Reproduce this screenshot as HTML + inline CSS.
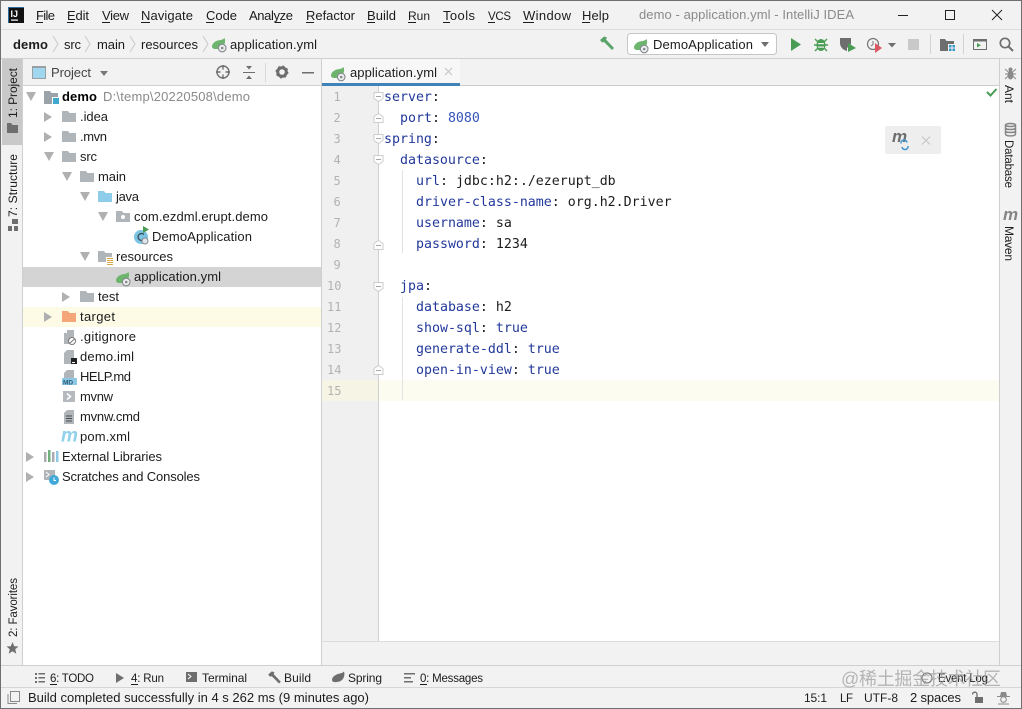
<!DOCTYPE html>
<html><head><meta charset="utf-8"><title>demo - application.yml - IntelliJ IDEA</title>
<style>
html,body{margin:0;padding:0;background:#f2f2f2;width:1022px;height:709px;overflow:hidden}
svg{display:block}
text{font-family:"Liberation Sans","Noto Sans CJK SC",sans-serif;font-size:13px;fill:#1c1c1c}
text.s12{font-size:12px}
text.s115{font-size:11.5px}
text.m{font-family:"DejaVu Sans Mono",monospace;font-size:13.28px}
.k{fill:#22389a}.v{fill:#1c1c1c}.b{fill:#3554bb}
text.n{font-family:"DejaVu Sans Mono",monospace;font-size:12px;fill:#b2b2b2}
text.g{fill:#8a8a8a}
</style></head><body>
<svg width="1022" height="709" viewBox="0 0 1022 709" xmlns="http://www.w3.org/2000/svg">
<defs>
<g id="leaf"><path d="M0 8.5C0 5 4 2.500 7 2.200C9.500 2 11.500 1.200 12.600 0C13.600 3 13 6.500 11 8.500C9 10.600 6 11.200 3.500 11C1.500 11 0 10.200 0 8.500Z" fill="#6db56d"/><circle cx="10.200" cy="10" r="3.800" fill="#eeeeee" stroke="#858a8e" stroke-width="1.100"/><circle cx="10.200" cy="10" r="1.300" fill="#858a8e"/></g>
<path id="fold" d="M0 0H6L7.500 2H14V11H0Z"/>
<path id="ar" d="M0 0L8 5L0 10Z" fill="#b0b0b0"/>
<path id="ad" d="M0 0H10L5 9Z" fill="#b0b0b0"/>
<g id="fs"><path d="M-4.500 0.500H4.500V6.500L0 9.500L-4.500 6.500Z" fill="#fff" stroke="#cccccc"/><path d="M-2.500 4.500H2.500" stroke="#a8a8a8"/></g>
<g id="fe"><path d="M-4.500 9.500H4.500V3.500L0 0.500L-4.500 3.500Z" fill="#fff" stroke="#cccccc"/><path d="M-2.500 5.500H2.500" stroke="#a8a8a8"/></g>
<path id="ham" d="M1 4L5 0.500L8 1.500L7 3.500L15 12L13 14L5 6L3 6.500Z"/>
</defs>

<!-- base -->
<rect width="1022" height="709" fill="#f2f2f2"/>
<rect x="1" y="29" width="1020" height="1" fill="#dcdcdc"/>
<rect x="1" y="58" width="1020" height="1" fill="#cfcfcf"/>

<!-- logo -->
<rect x="8" y="7" width="16" height="16" fill="#111"/>
<rect x="8" y="7" width="16" height="1" fill="#2b6d9f"/><rect x="8" y="7" width="1" height="16" fill="#2b6d9f"/>
<text x="10.500" y="17" style="font-size:9px;font-weight:bold;fill:#fff">IJ</text>
<rect x="11" y="19.500" width="7" height="1.200" fill="#fff"/>

<!-- menu -->
<text x="36" y="20" textLength="19">File</text>
<text x="67" y="20" textLength="22">Edit</text>
<text x="102" y="20" textLength="27">View</text>
<text x="141" y="20" textLength="52">Navigate</text>
<text x="206" y="20" textLength="31">Code</text>
<text x="249" y="20" textLength="44">Analyze</text>
<text x="306" y="20" textLength="49">Refactor</text>
<text x="367" y="20" textLength="29">Build</text>
<text x="408" y="20" textLength="22" class="s12">Run</text>
<text x="443" y="20" textLength="32">Tools</text>
<text x="488" y="20" textLength="23" class="s115">VCS</text>
<text x="523" y="20" textLength="48">Window</text>
<text x="582" y="20" textLength="27">Help</text>
<g fill="#1c1c1c"><rect x="36" y="22" width="7" height="1"/><rect x="67" y="22" width="7" height="1"/><rect x="102" y="22" width="8" height="1"/><rect x="141" y="22" width="9" height="1"/><rect x="206" y="22" width="8" height="1"/><rect x="275" y="22" width="6" height="1"/><rect x="306" y="22" width="8" height="1"/><rect x="367" y="22" width="8" height="1"/><rect x="408" y="22" width="8" height="1"/><rect x="443" y="22" width="7" height="1"/><rect x="488" y="22" width="7" height="1"/><rect x="523" y="22" width="11" height="1"/><rect x="582" y="22" width="8" height="1"/></g>

<text x="639" y="19" textLength="215" class="g">demo - application.yml - IntelliJ IDEA</text>
<path d="M898 15.500H908" stroke="#222" fill="none"/>
<rect x="945.500" y="10.500" width="9" height="9" fill="none" stroke="#222"/>
<path d="M992 10L1002 20M1002 10L992 20" stroke="#222" fill="none"/>

<!-- nav -->
<text x="13" y="49" textLength="35" style="font-weight:bold">demo</text>
<text x="64" y="49" textLength="17">src</text>
<text x="97" y="49" textLength="28">main</text>
<text x="141" y="49" textLength="57">resources</text>
<text x="230" y="49" textLength="87">application.yml</text>
<g fill="none" stroke="#c8c8c8"><path d="M53 36L58 44L53 52"/><path d="M85 36L90 44L85 52"/><path d="M130 36L135 44L130 52"/><path d="M203 36L208 44L203 52"/></g>
<use href="#leaf" x="212" y="38"/>

<!-- toolbar -->
<use href="#ham" x="599" y="36" fill="#5aa469"/>
<rect x="627.500" y="33.500" width="149" height="21" rx="3" fill="#fff" stroke="#c6c6c6"/>
<use href="#leaf" x="634" y="39"/>
<text x="653" y="49" textLength="100">DemoApplication</text>
<path d="M761 42H769L765 47Z" fill="#6e6e6e"/>
<path d="M791 38L801 44.500L791 51Z" fill="#499c54"/>
<g fill="#499c54"><ellipse cx="821" cy="45" rx="4.500" ry="6"/><path d="M815 39L827 51M827 39L815 51M814 45H828" stroke="#499c54" stroke-width="1.400"/></g><rect x="818" y="43" width="6" height="1.200" fill="#f2f2f2"/><rect x="818" y="46.500" width="6" height="1.200" fill="#f2f2f2"/>
<path d="M840 38H851V44L847 48V51C843 50 840 47 840 43Z" fill="#6e6e6e"/><path d="M848 43L856 48L848 52Z" fill="#499c54"/>
<circle cx="873" cy="44" r="5.500" fill="none" stroke="#777" stroke-width="1.200"/><path d="M873 41V44.500L871 46" stroke="#777" fill="none"/><path d="M875 43L882 48L875 53Z" fill="#db5860"/>
<path d="M888 43H896L892 47.500Z" fill="#6e6e6e"/>
<rect x="908" y="39" width="11" height="11" fill="#c9c9c9"/>
<rect x="930" y="34" width="1" height="20" fill="#d2d2d2"/>
<path d="M940 39H945L946.500 41H954V44H948V51H940Z" fill="#6e6e6e"/><g fill="#3b94c8"><rect x="949" y="45" width="2.500" height="2.500"/><rect x="952.500" y="45" width="2.500" height="2.500"/><rect x="949" y="48.500" width="2.500" height="2.500"/><rect x="952.500" y="48.500" width="2.500" height="2.500"/></g>
<rect x="963" y="34" width="1" height="20" fill="#d2d2d2"/>
<rect x="973.500" y="39.500" width="13" height="10" fill="none" stroke="#6e6e6e"/><rect x="973" y="39" width="14" height="2.500" fill="#6e6e6e"/><path d="M977 43L981 45.200L977 47.500Z" fill="#499c54"/>
<circle cx="1005" cy="43" r="4.700" fill="none" stroke="#6e6e6e" stroke-width="1.700"/><path d="M1008.500 46.500L1013 51" stroke="#6e6e6e" stroke-width="2" fill="none"/>

<!-- left strip -->
<rect x="2" y="59" width="20" height="86" fill="#c9c9c9"/>
<rect x="22" y="59" width="1" height="606" fill="#cfcfcf"/>
<text transform="translate(17,118) rotate(-90)" textLength="50" class="s12">1: Project</text>
<path d="M7 123H11L12.500 125H18V133H7Z" fill="#6e6e6e"/>
<text transform="translate(17,217) rotate(-90)" textLength="63" class="s12">7: Structure</text>
<g fill="#6e6e6e"><rect x="12" y="219" width="6" height="5"/><rect x="8" y="226" width="4" height="5"/><rect x="14" y="226" width="4" height="5"/></g>
<text transform="translate(17,637) rotate(-90)" textLength="59" class="s115">2: Favorites</text>
<path d="M12.500 642L14.200 646.200L18.500 646.500L15.200 649.300L16.300 653.800L12.500 651.300L8.700 653.800L9.800 649.300L6.500 646.500L10.800 646.200Z" fill="#6e6e6e"/>

<!-- project panel -->
<rect x="23" y="86" width="298" height="579" fill="#fff"/>
<rect x="23" y="85" width="298" height="1" fill="#d0d0d0"/>
<rect x="321" y="59" width="1" height="606" fill="#cfcfcf"/>
<rect x="32.500" y="66.500" width="13" height="12" fill="#9ed7ee" stroke="#9a9fa4"/>
<rect x="32" y="66" width="14" height="2" fill="#9a9fa4"/>
<text x="51" y="77" textLength="40" style="fill:#444">Project</text>
<path d="M100 71H108L104 76Z" fill="#777"/>
<circle cx="223" cy="72" r="6" fill="none" stroke="#6e6e6e" stroke-width="1.400"/><path d="M223 65V69.500M223 74.500V79M216 72H220.500M225.500 72H230" stroke="#6e6e6e" stroke-width="1.400" fill="none"/>
<path d="M243 72.500H255" stroke="#6e6e6e"/><path d="M246 66H252L249 69.500ZM246 79H252L249 75.500Z" fill="#6e6e6e"/>
<rect x="265" y="63" width="1" height="19" fill="#d8d8d8"/>
<circle cx="282" cy="72" r="4.300" fill="none" stroke="#6e6e6e" stroke-width="3"/><circle cx="282" cy="72" r="5.700" fill="none" stroke="#6e6e6e" stroke-width="1.500" stroke-dasharray="2 2.500"/>
<rect x="302" y="72" width="12" height="1.500" fill="#6e6e6e"/>

<!-- tree -->
<rect x="23" y="267" width="298" height="20" fill="#d4d4d4"/>
<rect x="23" y="307" width="298" height="20" fill="#fdfbe6"/>

<use href="#ad" x="26" y="92"/>
<path d="M44 91H50L51.500 93H58V97H52V104H44Z" fill="#9aa3aa"/><rect x="53" y="98" width="6" height="6" fill="#3fa9cf"/>
<text x="62" y="101" textLength="35" style="font-weight:bold;fill:#000">demo</text>
<text x="103" y="101" textLength="147" class="g">D:\temp\20220508\demo</text>

<use href="#ar" x="44" y="112"/><use href="#fold" x="62" y="111" fill="#b0b5ba"/><text x="80" y="121" textLength="28">.idea</text>
<use href="#ar" x="44" y="132"/><use href="#fold" x="62" y="131" fill="#b0b5ba"/><text x="80" y="141" textLength="27">.mvn</text>
<use href="#ad" x="44" y="152"/><use href="#fold" x="62" y="151" fill="#b0b5ba"/><text x="80" y="161" textLength="17">src</text>
<use href="#ad" x="62" y="172"/><use href="#fold" x="80" y="171" fill="#b0b5ba"/><text x="98" y="181" textLength="28">main</text>
<use href="#ad" x="80" y="192"/><use href="#fold" x="98" y="191" fill="#8ecdea"/><text x="116" y="201" textLength="23">java</text>
<use href="#ad" x="98" y="212"/><use href="#fold" x="116" y="211" fill="#b0b5ba"/><circle cx="123" cy="217" r="2" fill="#fff"/><text x="134" y="221" textLength="134">com.ezdml.erupt.demo</text>
<circle cx="141" cy="237" r="7" fill="#7cc4e4"/><path d="M144 234.500A3.500 3.500 0 1 0 144 239.500" fill="none" stroke="#3b4b55" stroke-width="1.300"/><path d="M143 230V226L149 229.500L143 233Z" fill="#499c54"/><circle cx="145" cy="241" r="3" fill="#dfe6ea" stroke="#858a8e"/><text x="152" y="241" textLength="100">DemoApplication</text>
<use href="#ad" x="80" y="252"/><path d="M98 251H104L105.500 253H112V257H106V262H98Z" fill="#b0b5ba"/><g fill="#d8a74c"><rect x="107" y="258" width="6" height="1"/><rect x="107" y="260" width="6" height="1"/><rect x="107" y="262" width="6" height="1"/><rect x="107" y="264" width="6" height="1"/></g><text x="116" y="261" textLength="57">resources</text>
<use href="#leaf" x="116" y="272"/><text x="134" y="281" textLength="87">application.yml</text>
<use href="#ar" x="62" y="292"/><use href="#fold" x="80" y="291" fill="#b0b5ba"/><text x="98" y="301" textLength="21">test</text>
<use href="#ar" x="44" y="312"/><use href="#fold" x="62" y="311" fill="#f4a57a"/><text x="80" y="321" textLength="35">target</text>

<path d="M67 330H74V344H64V333Z" fill="#b0b5ba"/><path d="M67 330V333H64Z" fill="#fff"/><circle cx="72" cy="341" r="3.500" fill="#fff" stroke="#777"/><path d="M70 343L74.500 339" stroke="#777"/><text x="80" y="341" textLength="56">.gitignore</text>
<path d="M67 350H74V364H64V353Z" fill="#b0b5ba"/><rect x="71" y="358" width="6" height="6" fill="#222"/><rect x="72" y="362" width="3" height="1" fill="#fff"/><text x="80" y="361" textLength="54">demo.iml</text>
<path d="M67 370H74V378H64V373Z" fill="#b0b5ba"/><rect x="62" y="378" width="15" height="7" fill="#8dc8e4"/><text x="63" y="384.500" style="font-size:6.500px;font-weight:bold;fill:#2a5d78">MD</text><text x="80" y="381" textLength="51">HELP.md</text>
<rect x="63" y="391" width="12" height="11" fill="#b6babe"/><path d="M67 393.500L70.500 396.500L67 399.500" stroke="#fff" stroke-width="1.500" fill="none"/><text x="80" y="401" textLength="33">mvnw</text>
<path d="M67 410H74V424H64V413Z" fill="#b0b5ba"/><path d="M66 416H72M66 418.500H72M66 421H72" stroke="#4a4a4a"/><text x="80" y="421" textLength="60">mvnw.cmd</text>
<text x="61" y="441.500" style="font-size:19px;font-weight:bold;font-style:italic;fill:#8fd0ea" textLength="16">m</text><text x="80" y="441" textLength="50">pom.xml</text>

<use href="#ar" x="26" y="452"/>
<g fill="#a9adb2"><rect x="44" y="452" width="2.500" height="10"/><rect x="52" y="452" width="2.500" height="10"/></g><rect x="48" y="450" width="2.500" height="12" fill="#6fb07c"/><rect x="56" y="451" width="2.500" height="11" fill="#8dc8e4"/>
<text x="62" y="461" textLength="100">External Libraries</text>
<use href="#ar" x="26" y="472"/>
<rect x="44" y="470" width="11" height="10" fill="#b0b5ba"/><path d="M46 472L49 474.500L46 477" stroke="#fff" fill="none"/><circle cx="54" cy="480" r="5" fill="#3fa9d9"/><path d="M54 477.500V480.500H56" stroke="#fff" fill="none"/>
<text x="62" y="481" textLength="138">Scratches and Consoles</text>

<!-- tabs -->
<rect x="322" y="59" width="138" height="24" fill="#f7f7f7"/>
<rect x="322" y="85" width="677" height="1" fill="#cccccc"/>
<rect x="322" y="83" width="138" height="3" fill="#4083b8"/>
<use href="#leaf" x="331" y="67"/>
<text x="350" y="77" textLength="87">application.yml</text>
<path d="M445 68L452 75M452 68L445 75" stroke="#c4c4c4" fill="none"/>

<!-- editor -->
<rect x="322" y="86" width="57" height="555" fill="#f0f0f0"/>
<rect x="379" y="86" width="620" height="555" fill="#fff"/>
<rect x="378" y="86" width="1" height="555" fill="#d0d0d0"/>
<rect x="322" y="380" width="56" height="21" fill="#f6f4e4"/>
<rect x="379" y="380" width="620" height="21" fill="#fdfcf0"/>
<rect x="402" y="170" width="1" height="83" fill="#e2e2e2"/>
<rect x="402" y="297" width="1" height="103" fill="#e2e2e2"/>

<text class="n" x="333.500" y="101">1</text><text class="n" x="333.500" y="122">2</text><text class="n" x="333.500" y="143">3</text><text class="n" x="333.500" y="164">4</text><text class="n" x="333.500" y="185">5</text><text class="n" x="333.500" y="206">6</text><text class="n" x="333.500" y="227">7</text><text class="n" x="333.500" y="248">8</text><text class="n" x="333.500" y="269">9</text><text class="n" x="327" y="290">10</text><text class="n" x="327" y="311">11</text><text class="n" x="327" y="332">12</text><text class="n" x="327" y="353">13</text><text class="n" x="327" y="374">14</text><text class="n" x="327" y="395">15</text>

<use href="#fs" x="378.500" y="92"/><use href="#fe" x="378.500" y="113"/><use href="#fs" x="378.500" y="134"/><use href="#fs" x="378.500" y="155"/><use href="#fe" x="378.500" y="240"/><use href="#fs" x="378.500" y="282"/><use href="#fe" x="378.500" y="365"/>

<text class="m" x="384" y="101"><tspan class="k">server</tspan><tspan class="v">:</tspan></text>
<text class="m" x="400" y="122"><tspan class="k">port</tspan><tspan class="v">: </tspan><tspan class="b">8080</tspan></text>
<text class="m" x="384" y="143"><tspan class="k">spring</tspan><tspan class="v">:</tspan></text>
<text class="m" x="400" y="164"><tspan class="k">datasource</tspan><tspan class="v">:</tspan></text>
<text class="m" x="416" y="185"><tspan class="k">url</tspan><tspan class="v">: jdbc:h2:./ezerupt_db</tspan></text>
<text class="m" x="416" y="206"><tspan class="k">driver-class-name</tspan><tspan class="v">: org.h2.Driver</tspan></text>
<text class="m" x="416" y="227"><tspan class="k">username</tspan><tspan class="v">: sa</tspan></text>
<text class="m" x="416" y="248"><tspan class="k">password</tspan><tspan class="v">: 1234</tspan></text>
<text class="m" x="400" y="290"><tspan class="k">jpa</tspan><tspan class="v">:</tspan></text>
<text class="m" x="416" y="311"><tspan class="k">database</tspan><tspan class="v">: h2</tspan></text>
<text class="m" x="416" y="332"><tspan class="k">show-sql</tspan><tspan class="v">: </tspan><tspan class="k">true</tspan></text>
<text class="m" x="416" y="353"><tspan class="k">generate-ddl</tspan><tspan class="v">: </tspan><tspan class="k">true</tspan></text>
<text class="m" x="416" y="374"><tspan class="k">open-in-view</tspan><tspan class="v">: </tspan><tspan class="k">true</tspan></text>

<path d="M987 92L990.500 95.500L996.500 89" fill="none" stroke="#499c54" stroke-width="2"/>

<!-- maven popup -->
<rect x="885" y="126" width="56" height="28" rx="2" fill="#eeeeee"/>
<text x="892" y="142" textLength="15" style="font-size:17px;font-weight:bold;font-style:italic;fill:#6e6e6e">m</text>
<path d="M901 143.500A3 3 0 0 1 907 142.500M908 146A3 3 0 0 1 902 147" fill="none" stroke="#3f96d0" stroke-width="1.500"/>
<path d="M922 136.500L930 144.500M930 136.500L922 144.500" stroke="#c4c4c4" fill="none"/>

<!-- right strip -->
<rect x="999" y="59" width="1" height="606" fill="#cfcfcf"/>
<ellipse cx="1010.500" cy="75" rx="3" ry="4.500" fill="#8a8a8a"/><circle cx="1010.500" cy="69.500" r="2" fill="#8a8a8a"/><path d="M1005 69L1016 79M1016 69L1005 79M1005 74H1016" stroke="#8a8a8a"/>
<text transform="translate(1005,85) rotate(90)" textLength="18" class="s12">Ant</text>
<g fill="none" stroke="#858585" stroke-width="1.500"><ellipse cx="1010.500" cy="125" rx="5" ry="1.500"/><path d="M1005.500 125V134C1005.500 136.500 1015.500 136.500 1015.500 134V125M1005.500 128C1005.500 130 1015.500 130 1015.500 128M1005.500 131C1005.500 133 1015.500 133 1015.500 131"/></g>
<text transform="translate(1005,140) rotate(90)" textLength="48" class="s115">Database</text>
<text x="1003" y="220" textLength="15" style="font-size:17px;font-weight:bold;font-style:italic;fill:#858585">m</text>
<text transform="translate(1005,226) rotate(90)" textLength="35" class="s12">Maven</text>

<!-- bottom -->
<rect x="322" y="641" width="677" height="1" fill="#dcdcdc"/>
<rect x="1" y="665" width="1020" height="1" fill="#cfcfcf"/>
<rect x="1" y="687" width="1020" height="1" fill="#d6d6d6"/>
<g fill="#6e6e6e"><rect x="35" y="673" width="2" height="2"/><rect x="35" y="677" width="2" height="2"/><rect x="35" y="681" width="2" height="2"/><rect x="38.500" y="673" width="6.500" height="1.500"/><rect x="38.500" y="677" width="6.500" height="1.500"/><rect x="38.500" y="681" width="6.500" height="1.500"/></g>
<text x="50" y="682" textLength="44" class="s115">6: TODO</text><rect x="50" y="684" width="7" height="1" fill="#1c1c1c"/>
<path d="M116 673L124 678L116 683Z" fill="#6e6e6e"/>
<text x="131" y="682" textLength="33" class="s115">4: Run</text><rect x="131" y="684" width="7" height="1" fill="#1c1c1c"/>
<rect x="186" y="672" width="11" height="10" fill="#6e6e6e"/><path d="M188 674L191 676.500L188 679" stroke="#fff" fill="none"/>
<text x="202" y="682" textLength="45" class="s12">Terminal</text>
<use href="#ham" x="267" y="671" fill="#6e6e6e" transform="translate(27,67) scale(.9)"/>
<text x="284" y="682" textLength="27" class="s12">Build</text>
<path d="M332 680C332 676 337 674 340 673.500C342 673 343 672.500 344 671.500C345 675 344 678 342 680C340 682 336 682.500 334 682C333 682 332 681 332 680Z" fill="#6e6e6e"/>
<text x="348" y="682" textLength="34" class="s12">Spring</text>
<g fill="#6e6e6e"><rect x="404" y="673" width="11" height="1.500"/><rect x="404" y="677" width="7" height="1.500"/><rect x="404" y="681" width="9" height="1.500"/></g>
<text x="420" y="682" textLength="63" class="s115">0: Messages</text><rect x="420" y="684" width="7" height="1" fill="#1c1c1c"/>
<circle cx="927" cy="678" r="5" fill="none" stroke="#6e6e6e"/>
<text x="938" y="682" textLength="50" class="s115">Event Log</text>
<text x="841" y="685" textLength="160" style="font-size:18px;fill:#9a9a9a;fill-opacity:.7">@稀土掘金技术社区</text>

<rect x="10.500" y="691.500" width="9" height="10" fill="none" stroke="#8a8a8a"/><path d="M8 694V703.500H17" fill="none" stroke="#8a8a8a"/>
<text x="28" y="702" textLength="341">Build completed successfully in 4 s 262 ms (9 minutes ago)</text>
<text x="804" y="702" textLength="23" class="s12">15:1</text>
<text x="840" y="702" textLength="13" class="s115">LF</text>
<text x="864" y="702" textLength="34" class="s12">UTF-8</text>
<text x="910" y="702" textLength="51">2 spaces</text>
<rect x="975" y="697" width="8" height="6" fill="#6e6e6e"/><path d="M977 697V694C977 691.500 972.500 691.500 972.500 694.500" fill="none" stroke="#6e6e6e" stroke-width="1.300"/>
<path d="M1000 696L1001 692H1006L1007 696H1010V697H997V696Z" fill="#8a8a8a"/><circle cx="1003.500" cy="699.500" r="2.800" fill="none" stroke="#8a8a8a"/><path d="M998 704H1009" stroke="#8a8a8a"/>

<!-- window frame -->
<rect x="0.500" y="0.500" width="1021" height="708" fill="none" stroke="#6f6f6f"/>
</svg>
</body></html>
